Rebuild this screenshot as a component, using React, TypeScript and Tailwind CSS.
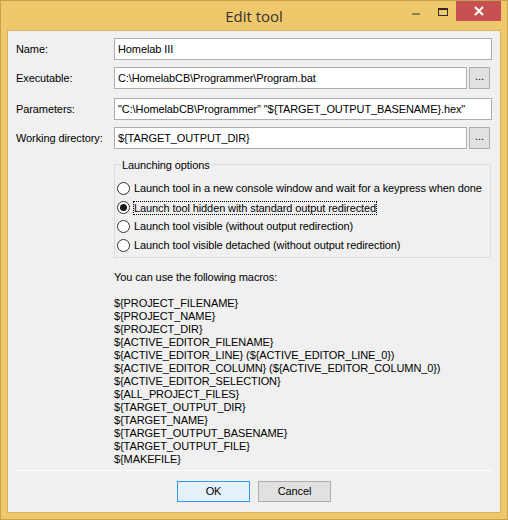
const macros = [
  "${PROJECT_FILENAME}",
  "${PROJECT_NAME}",
  "${PROJECT_DIR}",
  "${ACTIVE_EDITOR_FILENAME}",
  "${ACTIVE_EDITOR_LINE} (${ACTIVE_EDITOR_LINE_0})",
  "${ACTIVE_EDITOR_COLUMN} (${ACTIVE_EDITOR_COLUMN_0})",
  "${ACTIVE_EDITOR_SELECTION}",
  "${ALL_PROJECT_FILES}",
  "${TARGET_OUTPUT_DIR}",
  "${TARGET_NAME}",
  "${TARGET_OUTPUT_BASENAME}",
  "${TARGET_OUTPUT_FILE}",
  "${MAKEFILE}",
];

const options = [
  "Launch tool in a new console window and wait for a keypress when done",
  "Launch tool hidden with standard output redirected",
  "Launch tool visible (without output redirection)",
  "Launch tool visible detached (without output redirection)",
];

function Field({ label, value, browse, className }: { label: string; value: string; browse?: boolean; className?: string }) {
  return (
    <div className={`flex items-center ${className ?? ""}`}>
      <span className="w-[98px] shrink-0">{label}</span>
      <div className="flex flex-1 items-center gap-[2px]">
        <div className="flex h-[22px] flex-1 items-center border border-[#abadb3] bg-white px-[3px] whitespace-nowrap overflow-hidden">
          {value}
        </div>
        {browse && (
          <div className="mr-[2px] flex h-[22px] w-[21px] items-center justify-center border border-[#adadad] bg-[#e1e1e1] pb-[3px]">
            ...
          </div>
        )}
      </div>
    </div>
  );
}

function Radio({ checked }: { checked?: boolean }) {
  return (
    <span className="flex h-[13px] w-[13px] shrink-0 items-center justify-center rounded-full border border-[#333] bg-white">
      {checked && <span className="h-[7px] w-[7px] rounded-full bg-[#1a1a1a]" />}
    </span>
  );
}

export default function App() {
  return (
    <div className="flex h-[520px] w-[508px] flex-col border border-[#c2a24f] bg-[#f0c86c] font-['Liberation_Sans',sans-serif] text-[11px] tracking-[-0.1px] text-black">
      <div className="relative flex h-[29px] shrink-0 items-start justify-center">
        <span className="mt-[4px] font-['Open_Sans',sans-serif] text-[15px] tracking-normal text-[#333]">Edit tool</span>
        <div className="absolute right-[6px] top-0 flex items-start">
          <div className="mr-[18px] mt-[12px] h-[2px] w-[8px] bg-[#8b7a52]" />
          <div className="mr-[8px] mt-[7px] h-[8px] w-[10px] border border-t-2 border-[#2b2b2b]" />
          <div className="flex h-[20px] w-[45px] items-center justify-center bg-[#c75050] text-white">
            <svg width="10" height="10" viewBox="0 0 10 10">
              <path d="M1 1 L9 9 M9 1 L1 9" stroke="white" strokeWidth="2" />
            </svg>
          </div>
        </div>
      </div>
      <div className="mx-[6px] mb-[6px] flex flex-1 flex-col border border-[#d9b45d] bg-[#f0f0f0] px-[8px] pt-[7px]">
        <Field label="Name:" value="Homelab III" />
        <Field className="mt-[7px]" label="Executable:" value="C:\HomelabCB\Programmer\Program.bat" browse />
        <Field className="mt-[9px]" label="Parameters:" value={'"C:\\HomelabCB\\Programmer" "${TARGET_OUTPUT_BASENAME}.hex"'} />
        <Field className="mt-[7px]" label="Working directory:" value="${TARGET_OUTPUT_DIR}" browse />

        <div className="ml-[98px] mr-[1px] mt-[15px] relative h-[94px] border border-[#dcdcdc] pt-[17px] pl-[2px]">
          <span className="absolute -top-[8px] left-[6px] bg-[#f0f0f0] px-[1px]">Launching options</span>
          <div className="flex flex-col gap-[6px]">
            {options.map((o, i) => (
              <div key={o} className="flex h-[13px] items-center gap-[4px]">
                <Radio checked={i === 1} />
                <span className={i === 1 ? "outline outline-1 outline-dotted outline-black leading-[12px]" : ""}>{o}</span>
              </div>
            ))}
          </div>
        </div>

        <div className="ml-[98px] mt-[13px] leading-[13px]">
          <div>You can use the following macros:</div>
          <div className="mt-[13px]">
            {macros.map((m) => (
              <div key={m}>{m}</div>
            ))}
          </div>
        </div>

        <div className="mt-[4px] h-[1px] bg-[#a0a0a0] border-b border-white" />
        <div className="flex justify-center gap-[8px] pt-[10px]">
          <div className="flex h-[21px] w-[73px] items-center justify-center border border-[#3399ff] bg-[#e5f1fb]">OK</div>
          <div className="flex h-[21px] w-[73px] items-center justify-center border border-[#adadad] bg-[#e1e1e1]">Cancel</div>
        </div>
      </div>
    </div>
  );
}
